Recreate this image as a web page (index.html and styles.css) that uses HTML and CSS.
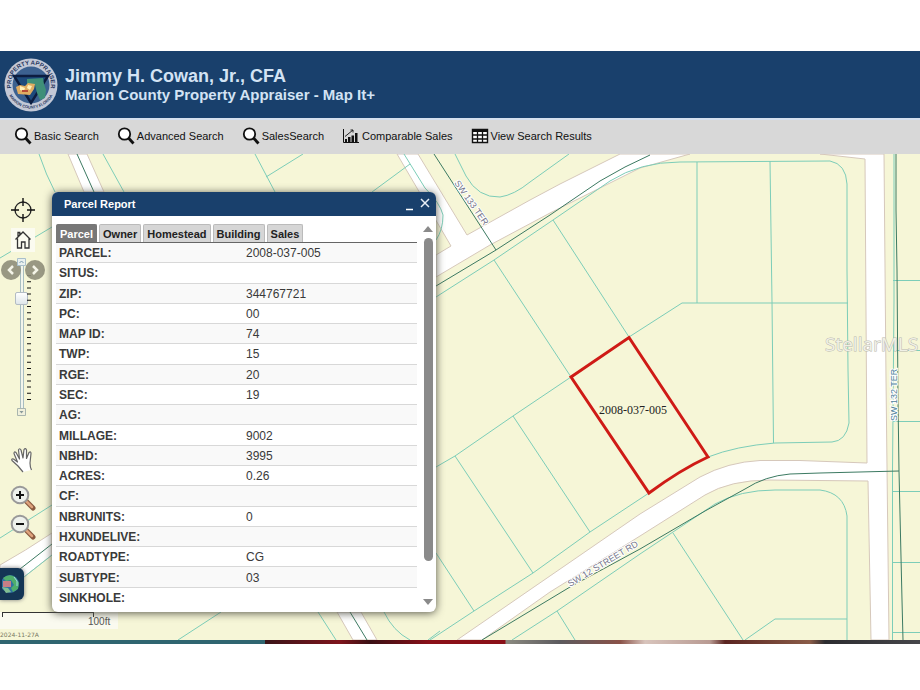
FILE: index.html
```html
<!DOCTYPE html>
<html lang="en">
<head>
<meta charset="utf-8">
<title>Marion County Property Appraiser - Map It+</title>
<link rel="stylesheet" href="styles.css">
</head>
<body>
<header class="banner">
  <svg class="seal" viewBox="0 0 54 54" aria-hidden="true">
    <defs>
      <path id="arc-top" d="M7.5 31 A20 20 0 1 1 46.500 31"/>
      <path id="arc-bottom" d="M3 31 A24.500 24.500 0 0 0 51 31"/>
    </defs>
    <circle cx="27" cy="27" r="26.500" fill="#c3c8d6"/>
    <circle cx="27" cy="27" r="18.500" fill="#3c6190"/>
    <path d="M10 18h34L27 45z" fill="#1d4a7c" stroke="#0d1d40" stroke-width="2.500"/>
    <path d="M23 21l16 -1 1 6 2 6 -1 8 -5 2 -3 -7 -2 -8 -8 -1z" fill="#3f8f78"/>
    <path d="M12 29l4 -2 5 1 3 -3 7 1 -1 5 -4 6 -12 -1z" fill="#e0ad62"/>
    <path d="M16 28l5 2 -1 3 -4 -1zM24 27l4 1 -2 4 -3 -2z" fill="#fff0b8"/>
    <path d="M18 32h6v2h-6z" fill="#b84c35"/>
    <text class="seal-name"><textPath href="#arc-top" startOffset="50%" text-anchor="middle">PROPERTY APPRAISER</textPath></text>
    <text class="seal-place"><textPath href="#arc-bottom" startOffset="50%" text-anchor="middle">MARION COUNTY FLORIDA</textPath></text>
  </svg>
  <div>
    <h1>Jimmy H. Cowan, Jr., CFA</h1>
    <p>Marion County Property Appraiser - Map It+</p>
  </div>
</header>

<nav class="toolbar">
  <button type="button"><svg width="18" height="18" viewBox="0 0 18 18"><circle cx="7.500" cy="7" r="5.700" fill="#fff" stroke="#111" stroke-width="1.800"/><path d="M11.500 11l5 5.500" stroke="#111" stroke-width="2.800"/></svg>Basic Search</button>
  <button type="button"><svg width="18" height="18" viewBox="0 0 18 18"><circle cx="7.500" cy="7" r="5.700" fill="#fff" stroke="#111" stroke-width="1.800"/><path d="M11.500 11l5 5.500" stroke="#111" stroke-width="2.800"/></svg>Advanced Search</button>
  <button type="button"><svg width="18" height="18" viewBox="0 0 18 18"><circle cx="7.500" cy="7" r="5.700" fill="#fff" stroke="#111" stroke-width="1.800"/><path d="M11.500 11l5 5.500" stroke="#111" stroke-width="2.800"/></svg>SalesSearch</button>
  <button type="button"><svg width="18" height="18" viewBox="0 0 18 18"><path d="M1.500 2v13.500H17" fill="none" stroke="#111"/><path d="M3 12h2v3H3zM6 10h2.500v5H6zM9.500 8.500H12V15H9.500zM13 6h2.500v9H13z" fill="#111"/><path d="M3 9.500L11 3M8.500 3H11v2.500" fill="none" stroke="#222"/></svg>Comparable Sales</button>
  <button type="button"><svg width="18" height="18" viewBox="0 0 18 18"><path d="M1.500 2.500h15v13h-15z" fill="#fff" stroke="#111" stroke-width="1.400"/><path d="M1 3.500h16" stroke="#111" stroke-width="3"/><path d="M1 8h16M1 12h16M6.500 3v12M11.500 3v12" stroke="#111" stroke-width="1.300"/></svg>View Search Results</button>
</nav>

<main class="map">
  <svg class="canvas" viewBox="0 154 920 486" preserveAspectRatio="xMinYMin slice" role="img" aria-label="Parcel map">
    <g class="road">
      <path d="M68 154L84 192H104L87 154z"/>
      <path d="M397 154L451 246L436 255V277L490 245L550 213L600 188L640 168L690 154H620L600 164L560 184L530 200L467 235L418 154z"/>
      <path d="M820 154L865 159L867 463L800 460.500H760Q728 462 700 477L640 514L457 640H482L550 592L640 536L705 495Q730 480 770 480L868 481L871 640H889L886 380L884 154z"/>
      <path d="M0 565Q25 551 52 533V555L24 577L0 593z"/>
      <path d="M337 612L353 640H377L361 612z"/>
    </g>
    <g class="lot">
      <path d="M39 154Q46 175 55 192M103 154L124 192M0 258L52 227M255 154L275 192M266 177L303 154M372 192L410 164"/>
      <path d="M404 154L425 188Q440 203 443 215Q443 230 436 240"/>
      <path d="M455 154L466 176Q478 198 500 197Q514 195 530 182L569 154"/>
      <path d="M436 297L494 260L553 220L610 181Q640 162 680 162L830 161Q846 164 847 184V270L848 370L849 423Q846 441 832 442L775 443Q736 446 708 457"/>
      <path d="M494 260L571 377M553 220L629 337L682 303H848M697 162V303M770 161L772 302L773.500 443"/>
      <path d="M571 377L513 416L455 456L436 467M513 416L590 532M455 456L533 573M436 553L474 611M649 493L590 532L533 573L474 611L430 640"/>
      <path d="M512 640L557 611L640 554L715 504Q740 490 775 490H820Q844 493 847 516V640M557 611L575 640M673 533L743 640M745 640L775 619H847"/>
      <path d="M894 154V300L892.500 470V640M893 280.500H920M893 350.500H920M893 421.500H920M893 491.500H920M893 562.500H920M893 632.500H920"/>
      <path d="M0 538L52 505M24 577L52 555M318 612L336 640M221 612L178 640M384 612Q393 631 410 640M440 631L428 640"/>
    </g>
    <g class="centerline">
      <path d="M77 154L94 192M20 569L52 544M350 612L367 640"/>
      <path d="M434 154L496 250L550 215L600 181Q625 166 650 155M496 250L436 286"/>
      <path d="M482 640L570 587L640 549L705 511L745 489Q765 476 790 474L820 473L899 471"/>
      <path d="M896 154V210L897 270L898 400L899 471L902 600L903 640"/>
    </g>
    <path class="selected" d="M571 377L629 337.500L708 457Q680 470 649 493z"/>
    <text class="parcel-id" x="599" y="414">2008-037-005</text>
    <g class="street">
      <text transform="translate(454 183) rotate(55)">SW 133 TER</text>
      <text transform="translate(570 587) rotate(-31)">SW 12 STREET RD</text>
      <text class="street-blue" transform="translate(897 421) rotate(-90)">SW 132 TER</text>
    </g>
    <text class="watermark" x="825" y="351">StellarMLS</text>
  </svg>

  <div class="tools">
    <button type="button" class="tool" aria-label="Locate"><svg width="24" height="24" viewBox="0 0 24 24"><circle cx="12" cy="12" r="8" fill="none" stroke="#222" stroke-width="1.300"/><path d="M12 0v8M12 16v8M0 12h8M16 12h8" stroke="#111" stroke-width="1.400"/></svg></button>
    <button type="button" class="tool home" aria-label="Full extent"><svg width="18" height="20" viewBox="0 0 18 20"><path d="M1.500 9.500L9 2l7.500 7.500M3.500 8.500V18h4v-6h3.500v6h4V8.500M4 7V2.500h1.800V5" fill="none" stroke="#333" stroke-width="1.300"/></svg></button>
    <div class="zoom-slider">
      <button type="button" class="step" aria-label="Zoom in one level"><svg width="9" height="8" viewBox="0 0 9 8"><path d="M.5.500h8v7h-8z" fill="#e9f0ee" stroke="#a9bfca"/><path d="M2.500 5L4.500 3l2 2" fill="none" stroke="#7c9cb0"/></svg></button>
      <input type="range" min="0" max="20" value="4" aria-label="Zoom level">
      <button type="button" class="step" aria-label="Zoom out one level"><svg width="9" height="8" viewBox="0 0 9 8"><path d="M.5.500h8v7h-8z" fill="#f0f0dc" stroke="#a9b5ae"/><path d="M2.500 3h4l-2 2.500z" fill="#8a9a9a"/></svg></button>
      <svg class="ticks" width="4" height="126" viewBox="0 0 4 126" aria-hidden="true"><path d="M2 0v126" stroke="#111" stroke-width="4" stroke-dasharray="1 5.200"/></svg>
      <button type="button" class="extent previous" aria-label="Previous extent"><svg width="20" height="20" viewBox="0 0 20 20"><path d="M12 6l-4 4 4 4" fill="none" stroke="#f4f4ea" stroke-width="2.500"/></svg></button>
      <button type="button" class="extent next" aria-label="Next extent"><svg width="20" height="20" viewBox="0 0 20 20"><path d="M8 6l4 4-4 4" fill="none" stroke="#f4f4ea" stroke-width="2.500"/></svg></button>
    </div>
    <button type="button" class="tool" aria-label="Pan"><svg width="26" height="28" viewBox="0 0 26 28"><path d="M13 26L8 20 2 14.500Q1 12.500 3.500 13L7.500 16 4 7.500Q4 5 6 6.500L9.500 13 8.500 4Q9.500 1.500 11 4L13 12 14 3.500Q15.500 1.500 16.500 4V12.500L19 6.500Q21 5 21 7.500L20 17Q20 21 21.500 24" fill="#fff" stroke="#666" stroke-width="1.200" stroke-linejoin="round"/></svg></button>
    <div class="lens-group">
      <button type="button" class="tool" aria-label="Zoom in"><svg width="26" height="28" viewBox="0 0 26 28"><path d="M15 16l8 8" stroke="#8a5a40" stroke-width="5" stroke-linecap="round"/><path d="M16 17l6 6" stroke="#dda27c" stroke-width="2.500" stroke-linecap="round"/><circle cx="10" cy="11" r="8.300" fill="#eef1ec" stroke="#999" stroke-width="2"/><path d="M10 7v8M6 11h8" stroke="#111" stroke-width="2"/></svg></button>
      <button type="button" class="tool" aria-label="Zoom out"><svg width="26" height="28" viewBox="0 0 26 28"><path d="M15 16l8 8" stroke="#8a5a40" stroke-width="5" stroke-linecap="round"/><path d="M16 17l6 6" stroke="#dda27c" stroke-width="2.500" stroke-linecap="round"/><circle cx="10" cy="11" r="8.300" fill="#eef1ec" stroke="#999" stroke-width="2"/><path d="M6 11h8" stroke="#111" stroke-width="2"/></svg></button>
    </div>
    <button type="button" class="tool basemap" aria-label="Basemaps"><svg width="20" height="22" viewBox="0 0 20 22"><circle cx="8" cy="11" r="9" fill="#2f72a0"/><path d="M1 5q6-5 12-1l4 6-1 6-5 3-2-4 3-3-3-5-5 1z" fill="#4fae6b"/><path d="M0 14l6 1 3 4-5 1z" fill="#81bf93"/><path d="M1 8h8v6H1z" fill="#c77f86"/><path d="M12 4l3 4v5" fill="none" stroke="#9fd9e8"/></svg></button>
  </div>

  <div class="scale">
    <div class="scale-box"><div class="scale-bar"></div><span>100ft</span></div>
    <small>2024-11-27A</small>
  </div>

  <section class="report" aria-label="Parcel Report">
    <header class="report-head">
      <h2>Parcel Report</h2>
      <button type="button" aria-label="Minimize"><svg width="12" height="14" viewBox="0 0 12 14"><path d="M3 12.500h7" stroke="#fff" stroke-width="1.300"/></svg></button>
      <button type="button" aria-label="Close"><svg width="12" height="14" viewBox="0 0 12 14"><path d="M2 2l8 8M10 2l-8 8" stroke="#e8eef6" stroke-width="1.500"/></svg></button>
    </header>
    <div class="report-body">
      <div class="content">
        <div class="tabs" role="tablist">
          <button type="button" role="tab" aria-selected="true">Parcel</button>
          <button type="button" role="tab" aria-selected="false">Owner</button>
          <button type="button" role="tab" aria-selected="false">Homestead</button>
          <button type="button" role="tab" aria-selected="false">Building</button>
          <button type="button" role="tab" aria-selected="false">Sales</button>
        </div>
        <table>
          <tbody>
            <tr><th scope="row">PARCEL:</th><td>2008-037-005</td></tr>
            <tr><th scope="row">SITUS:</th><td></td></tr>
            <tr><th scope="row">ZIP:</th><td>344767721</td></tr>
            <tr><th scope="row">PC:</th><td>00</td></tr>
            <tr><th scope="row">MAP ID:</th><td>74</td></tr>
            <tr><th scope="row">TWP:</th><td>15</td></tr>
            <tr><th scope="row">RGE:</th><td>20</td></tr>
            <tr><th scope="row">SEC:</th><td>19</td></tr>
            <tr><th scope="row">AG:</th><td></td></tr>
            <tr><th scope="row">MILLAGE:</th><td>9002</td></tr>
            <tr><th scope="row">NBHD:</th><td>3995</td></tr>
            <tr><th scope="row">ACRES:</th><td>0.26</td></tr>
            <tr><th scope="row">CF:</th><td></td></tr>
            <tr><th scope="row">NBRUNITS:</th><td>0</td></tr>
            <tr><th scope="row">HXUNDELIVE:</th><td></td></tr>
            <tr><th scope="row">ROADTYPE:</th><td>CG</td></tr>
            <tr><th scope="row">SUBTYPE:</th><td>03</td></tr>
            <tr><th scope="row">SINKHOLE:</th><td></td></tr>
          </tbody>
        </table>
      </div>
      <div class="scrollbar" aria-hidden="true">
        <svg width="10" height="6" viewBox="0 0 10 6"><path d="M0 6L5 0l5 6z" fill="#8a8a8a"/></svg>
        <div class="track"><div class="thumb"></div></div>
        <svg width="10" height="6" viewBox="0 0 10 6"><path d="M0 0l5 6 5-6z" fill="#8a8a8a"/></svg>
      </div>
    </div>
  </section>
</main>
<div class="strip"></div>
</body>
</html>
```
FILE: styles.css
```css
* { box-sizing: border-box; }

body {
  margin: 0;
  min-height: 100vh;
  padding: 51px 0 46px;
  display: flex;
  flex-direction: column;
  background: #fff;
  color: #3a3a3a;
  font: 11px/16px "Liberation Sans", Arial, sans-serif;
}

button {
  margin: 0;
  padding: 0;
  border: 0;
  background: none;
  color: inherit;
  font: inherit;
}

svg { display: block; flex: none; }

/* Banner */
.banner {
  display: flex;
  align-items: center;
  gap: 7px;
  height: 67px;
  padding-left: 4px;
  background: #19406c;
  color: #d3e3f4;
}
.banner h1, .banner p { margin: 0; font-weight: bold; }
.banner h1 { font-size: 18px; line-height: 20px; }
.banner p { font-size: 15px; line-height: 17px; }
.seal { width: 54px; height: 54px; }
.seal text { font-weight: bold; fill: #26365e; }
.seal-name { font-size: 6px; }
.seal-place { font-size: 4px; }

/* Toolbar */
.toolbar {
  display: flex;
  align-items: center;
  gap: 18px;
  height: 36px;
  padding: 0 0 3px 14px;
  border-top: 2px solid #d5e0ee;
  background: #d8d8d8;
  color: #111;
}
.toolbar button { display: flex; align-items: center; gap: 2px; white-space: nowrap; }

/* Map */
.map {
  position: relative;
  flex: 1;
  min-height: 480px;
  overflow: hidden;
  background: #f6f6d7;
}
.canvas { position: absolute; inset: 0; width: 100%; height: 100%; }
.road { fill: #fff; stroke: #d6c8bb; stroke-width: 1; }
.lot { fill: none; stroke: #7ccdb8; stroke-width: 1; }
.centerline { fill: none; stroke: #3c7a62; stroke-width: 1; }
.selected { fill: none; stroke: #cf1b16; stroke-width: 3; }
.parcel-id { font: 12px "Liberation Serif", "Times New Roman", serif; fill: #222; }
.street { font-size: 9px; fill: #73758a; stroke: #fff; stroke-width: 2; paint-order: stroke; }
.street-blue { fill: #4e7f9a; }
.watermark {
  font: 19px "Open Sans", sans-serif;
  fill: #f0f0e6;
  stroke: #b9b9ae;
  stroke-width: 1;
  paint-order: stroke;
}

/* Map tools */
.tools {
  position: absolute;
  top: 44px;
  left: 0;
  width: 46px;
  display: flex;
  flex-direction: column;
  align-items: center;
  gap: 6px;
}
.tool { display: flex; align-items: center; justify-content: center; }
.home { width: 24px; height: 24px; background: #fbfbf0; }
.zoom-slider {
  position: relative;
  display: flex;
  flex-direction: column;
  align-items: center;
  width: 46px;
  height: 158px;
  padding-right: 3px;
  margin-bottom: 24px;
}
.zoom-slider input {
  appearance: none;
  writing-mode: vertical-lr;
  flex: 1;
  min-height: 0;
  width: 14px;
  margin: 0;
  background: linear-gradient(90deg, #a8bdc0 1px, #f2f5ec 1px, #f2f5ec 3px, #a8bdc0 3px) center / 4px 100% no-repeat;
}
.zoom-slider input::-webkit-slider-thumb {
  appearance: none;
  width: 13px;
  height: 13px;
  border: 1px solid #b3bcc4;
  border-radius: 2px;
  background: linear-gradient(#fff, #dfe6ea);
}
.ticks { position: absolute; top: 17px; left: 27px; }
.extent { position: absolute; top: 2px; border-radius: 50%; background: #8f8e7a; opacity: .9; }
.previous { left: 1px; }
.next { left: 25px; }
.step { position: relative; z-index: 1; }
.lens-group { display: flex; flex-direction: column; gap: 1px; margin-top: 4px; }
.basemap {
  align-self: flex-start;
  width: 24px;
  height: 32px;
  margin-top: 21px;
  border-radius: 0 6px 6px 0;
  background: #143555;
  box-shadow: 0 0 4px #777;
}

/* Scale */
.scale { position: absolute; left: 0; bottom: 0; width: 118px; }
.scale-box {
  height: 17px;
  padding-left: 2px;
  background: #fafaef;
  color: #555;
}
.scale-bar {
  width: 92px;
  height: 5px;
  border: solid #333;
  border-width: 1px 1px 0;
}
.scale-box span { display: block; margin-left: 86px; font-size: 10px; line-height: 9px; }
.scale small {
  display: block;
  font: 6px/11px "DejaVu Sans", sans-serif;
  color: #77775f;
}

/* Report window */
.report {
  position: absolute;
  top: 38px;
  bottom: 28px;
  left: 52px;
  width: 384px;
  display: flex;
  flex-direction: column;
  overflow: hidden;
  border-radius: 6px;
  background: #fff;
  box-shadow: 0 1px 9px #55554a;
}
.report-head {
  display: flex;
  align-items: center;
  gap: 4px;
  height: 24px;
  padding: 0 5px 0 12px;
  background: #19406c;
  color: #fff;
}
.report-head h2 { flex: 1; margin: 0; font-size: 11px; line-height: 16px; }
.report-body { flex: 1; min-height: 0; display: flex; justify-content: space-between; padding: 8px 2px 5px 4px; }
.content { width: 361px; display: flex; flex-direction: column; }
.tabs { display: flex; gap: 2px; border-bottom: 1px solid #666; }
.tabs button {
  height: 18px;
  padding: 0 3px;
  border: 1px solid #bbb;
  border-bottom: 0;
  border-radius: 2px 2px 0 0;
  background: #d6d6d6;
  color: #222;
  font-weight: bold;
}
.tabs button[aria-selected="true"] { border-color: #777; background: #777; color: #fff; }
table { width: 100%; flex: 1; border-collapse: collapse; }
tr { border-bottom: 1px solid #d8d8d8; }
tr:nth-child(odd) { background: #f9f9f9; }
tr:last-child { border-bottom: 0; }
th, td { padding: 1px 0 0 3px; text-align: left; font-size: 12px; line-height: 16px; }
th { width: 187px; }
.scrollbar { width: 10px; display: flex; flex-direction: column; align-items: center; gap: 6px; padding: 2px 0; margin-right: 1px; }
.track { flex: 1; width: 9px; }
.thumb { height: 91%; border-radius: 5px; background: #8a8a8a; }

/* Imagery edge under the map */
.strip {
  height: 4px;
  background: linear-gradient(90deg, #2f6570 265px, #3a1418 265px, #7e141c 340px, #3a1014 370px, #8a1018 430px, #8a1018 505px, #8b8a80 506px, #5c5a5e 560px, #8a5248 620px, #d8c4bc 645px, #b89a92 710px, #5a2420 725px, #8a5c48 810px, #2c2c30 825px, #46464a);
}
```
